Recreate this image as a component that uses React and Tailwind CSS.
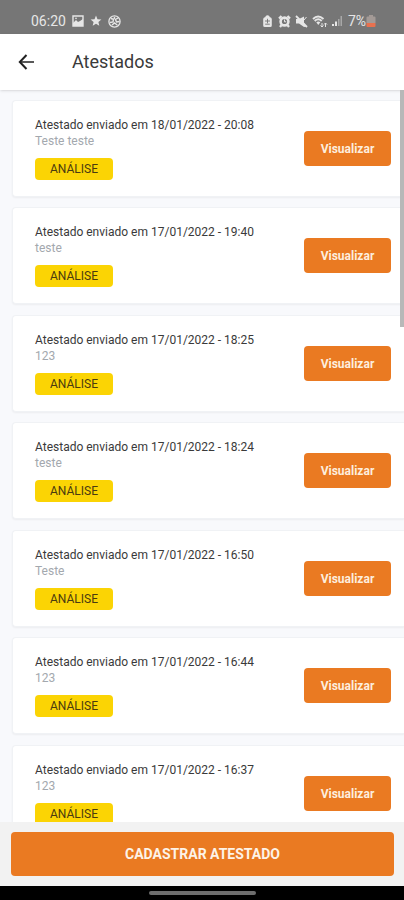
const certificates = [
  { date: '18/01/2022 - 20:08', note: 'Teste teste' },
  { date: '17/01/2022 - 19:40', note: 'teste' },
  { date: '17/01/2022 - 18:25', note: '123' },
  { date: '17/01/2022 - 18:24', note: 'teste' },
  { date: '17/01/2022 - 16:50', note: 'Teste' },
  { date: '17/01/2022 - 16:44', note: '123' },
  { date: '17/01/2022 - 16:37', note: '123' },
];

function StatusBar() {
  return (
    <div className="flex h-[34px] shrink-0 items-end justify-between bg-[#767676] pr-7 pb-[3px] pl-[31px] text-[#e6e6e6]">
      <div className="flex h-5 items-center gap-1.5">
        <span className="text-sm leading-5">06:20</span>
        {/* picture */}
        <svg className="size-3" viewBox="0 0 12 12" fill="none" stroke="currentColor">
          <path d="M1 1h10v10H1z" strokeWidth="1.4" />
          <path d="M1 8l3-3 2 2 2-1 3-2v7H1z" fill="currentColor" stroke="none" />
          <circle cx="4" cy="3.4" r="0.8" fill="currentColor" stroke="none" />
        </svg>
        {/* star */}
        <svg className="size-3" viewBox="0 0 12 12" fill="currentColor">
          <path d="M6 .6l1.500 3.600 3.900.3-3 2.500.9 3.800L6 8.800l-3.300 2 .9-3.800-3-2.500 3.900-.3z" />
        </svg>
        {/* ball */}
        <svg className="size-[13px]" viewBox="0 0 13 13" fill="none" stroke="currentColor">
          <circle cx="6.5" cy="6.5" r="5.6" strokeWidth="1.3" />
          <path d="M3 3.5l2.5.8L5 7l-3 .5M10 3L7.500 4.500l1 2.500 3-.5M4 10l2.500-2 2.800 2M6.500 2v2" strokeWidth="1.400" />
        </svg>
      </div>
      <div className="flex h-5 items-center gap-1">
        {/* battery saver */}
        <svg className="h-3 w-[11px]" viewBox="0 0 11 12" fill="currentColor">
          <path d="M3.500 1.200Q5.500-.5 7.500 1.200V2Q9.800 2.300 9.800 4v6.500q0 1.500-1.500 1.500H2.700q-1.500 0-1.500-1.500V4q0-1.700 2.300-2z" />
          <path d="M3 6h5M5.500 3.800v4.500M3.200 9.200h4.600" stroke="#767676" strokeWidth="0.900" />
        </svg>
        {/* alarm */}
        <svg className="ml-px size-[13px]" viewBox="0 0 13 13" fill="none" stroke="currentColor">
          <circle cx="6.500" cy="6.500" r="3.900" strokeWidth="2.600" />
          <path d="M1 3.500L3.500 1M12 3.500L9.500 1M3.500 10L2 12M9.500 10l1.500 2" strokeWidth="2.200" />
          <path d="M6.500 4.500v2.300h1.700" strokeWidth="1" />
        </svg>
        {/* muted */}
        <svg className="size-[13px]" viewBox="0 0 13 13" fill="currentColor">
          <path d="M1 4h3l5-2.500V8l2.500 3.500L9 12 4 8.500H1z" />
          <path d="M1 1l11 11" stroke="currentColor" strokeWidth="1.800" />
          <path d="M9 5l2.500-3" stroke="currentColor" />
        </svg>
        {/* wifi */}
        <svg className="h-[13px] w-4" viewBox="0 0 16 13" fill="none" stroke="currentColor">
          <path d="M1 4q5-5 10.500 0M2.700 6q3.500-3.300 7 0" strokeWidth="1.900" />
          <path d="M4.300 7.300q2-1.500 4 0l-2 2.700z" fill="currentColor" stroke="none" />
          <path d="M10 8v4M8.500 10.500L10 12l1.500-1.500M13.500 12V8M12 9.500L13.500 8 15 9.500" strokeWidth="1" />
        </svg>
        {/* signal */}
        <svg className="h-3 w-[10px]" viewBox="0 0 10 12" fill="currentColor">
          <path d="M0 9h2v2H0zM3 6.500h2V11H3z" />
          <path d="M6 4h1.500v7H6zM8.500 1H10v10H8.500z" opacity="0.450" />
        </svg>
        <div className="ml-0.5 flex items-center">
          <span className="text-sm leading-5">7%</span>
          <svg className="h-3 w-[10px]" viewBox="0 0 10 12">
            <path d="M3 0h4v1.500h1.500q1 0 1 1V8H.5V2.500q0-1 1-1H3z" fill="#a39a96" />
            <path d="M.5 8h9v3q0 1-1 1h-7q-1 0-1-1z" fill="#e8714f" />
          </svg>
        </div>
      </div>
    </div>
  );
}

function CertificateCard({ date, note }) {
  return (
    <li className="flex items-center justify-between rounded-l border border-r-0 border-[#f0f2f5] bg-white py-4 pr-[13px] pl-[22px] shadow-xs even:mb-px">
      <div className="flex flex-col items-start">
        <p className="text-xs leading-4 text-[#3a3a3a]">Atestado enviado em {date}</p>
        <p className="text-xs leading-4 text-[#a3a8ae]">{note}</p>
        <span className="mt-[9px] flex h-[22px] w-[78px] items-center justify-center rounded bg-[#fbd404] text-xs text-[#4a3a10]">
          ANÁLISE
        </span>
      </div>
      <button type="button" className="h-[35px] w-[87px] rounded bg-[#ea7a22] text-xs font-bold text-[#fdeede]">
        Visualizar
      </button>
    </li>
  );
}

export default function App() {
  return (
    <div className="flex h-screen flex-col overflow-hidden bg-[#f8f9fc] font-[Roboto,sans-serif]">
      <StatusBar />
      <header className="flex h-14 shrink-0 items-center gap-9 bg-white pl-[18px] shadow-sm">
        <button type="button" aria-label="Voltar" className="text-[#222222]">
          <svg className="size-[18px]" viewBox="0 0 18 18" fill="none" stroke="currentColor">
            <path d="M8.500 2L1.800 9l6.700 7" strokeWidth="2" />
            <path d="M2 9h14" strokeWidth="1.500" />
          </svg>
        </button>
        <h1 className="text-lg text-[#3a3a3a]">Atestados</h1>
      </header>
      <main className="relative min-h-0 flex-1 overflow-hidden">
        <ul className="flex flex-col gap-[10px] pt-[10px] pl-3">
          {certificates.map((item) => (
            <CertificateCard key={item.date} date={item.date} note={item.note} />
          ))}
        </ul>
        <div className="absolute top-0 right-0 h-[237px] w-1 bg-[#b8b8b8]" />
      </main>
      <footer className="shrink-0 bg-[#f2f2f2] py-[10px] pr-[10px] pl-[11px]">
        <button type="button" className="h-11 w-full rounded-sm bg-[#ea7a22] text-sm font-bold text-[#fdf3e8]">
          CADASTRAR ATESTADO
        </button>
      </footer>
      <div className="flex h-[14px] shrink-0 items-center justify-center bg-black">
        <div className="h-1 w-[107px] rounded-full bg-[#6e6e6e]" />
      </div>
    </div>
  );
}
